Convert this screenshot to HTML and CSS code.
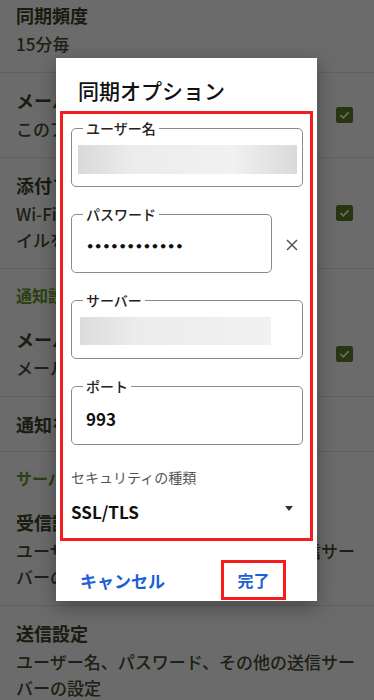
FILE: index.html
```html
<!DOCTYPE html>
<html lang="ja">
<head>
  <meta charset="UTF-8">
  <meta name="viewport" content="width=device-width, initial-scale=1.0">
  <title>同期オプション</title>
  <link rel="stylesheet" href="styles.css">
</head>
<body>
  <div class="settings">
    <div class="pref">
      <div class="pref-text">
        <div class="pref-title">同期頻度</div>
        <div class="pref-summary">15分毎</div>
      </div>
    </div>
    <div class="pref">
      <div class="pref-text">
        <div class="pref-title">メールを同期</div>
        <div class="pref-summary">このアカウントのメールを同期</div>
      </div>
      <svg class="check" viewBox="0 0 17 16"><rect width="17" height="16" rx="2.5"/><path d="M4.5 8.2l2.8 2.6 5.2-5.4"/></svg>
    </div>
    <div class="pref">
      <div class="pref-text">
        <div class="pref-title">添付ファイルをダウンロード</div>
        <div class="pref-summary">Wi-Fi経由で最近のメールの添付ファ<br>イルを自動ダウンロード</div>
      </div>
      <svg class="check" viewBox="0 0 17 16"><rect width="17" height="16" rx="2.5"/><path d="M4.5 8.2l2.8 2.6 5.2-5.4"/></svg>
    </div>
    <div class="pref-category">通知設定</div>
    <div class="pref">
      <div class="pref-text">
        <div class="pref-title">メール通知</div>
        <div class="pref-summary">メール着信時に通知</div>
      </div>
      <svg class="check" viewBox="0 0 17 16"><rect width="17" height="16" rx="2.5"/><path d="M4.5 8.2l2.8 2.6 5.2-5.4"/></svg>
    </div>
    <div class="pref">
      <div class="pref-text">
        <div class="pref-title">通知を管理</div>
      </div>
    </div>
    <div class="pref-category">サーバー設定</div>
    <div class="pref">
      <div class="pref-text">
        <div class="pref-title">受信設定</div>
        <div class="pref-summary">ユーザー名、パスワード、その他の受信サーバーの設定</div>
      </div>
    </div>
    <div class="pref">
      <div class="pref-text">
        <div class="pref-title">送信設定</div>
        <div class="pref-summary">ユーザー名、パスワード、その他の送信サーバーの設定</div>
      </div>
    </div>
  </div>

  <div class="scrim"></div>

  <div class="dialog">
    <h2 class="dialog-title">同期オプション</h2>
    <div class="highlight">
      <div class="field">
        <span class="field-label">ユーザー名</span>
        <div class="masked masked-full"></div>
      </div>
      <div class="field-row">
        <div class="field field-short field-text">
          <span class="field-label">パスワード</span>
          <span class="dots">••••••••••••</span>
        </div>
        <svg class="clear" viewBox="0 0 12 12"><path d="M1 1l10 10M11 1L1 11"/></svg>
      </div>
      <div class="field">
        <span class="field-label">サーバー</span>
        <div class="masked masked-part"></div>
      </div>
      <div class="field field-text">
        <span class="field-label">ポート</span>
        <span class="field-value">993</span>
      </div>
      <div class="select-label">セキュリティの種類</div>
      <div class="select">
        <span>SSL/TLS</span>
        <svg class="caret" viewBox="0 0 8 5"><path d="M0 0h8L4 5z"/></svg>
      </div>
    </div>
    <div class="actions">
      <button class="action">キャンセル</button>
      <button class="action action-done">完了</button>
    </div>
  </div>
</body>
</html>
```

FILE: styles.css
```css
* {
  margin: 0;
  padding: 0;
  box-sizing: border-box;
}

body {
  font-family: 'Noto Sans CJK JP', 'Noto Sans', sans-serif;
  background-color: #fff;
  color: #3e4428;
  width: 374px;
  height: 700px;
  overflow: hidden;
  position: relative;
}

.settings {
  margin-top: -12px;
}

.pref {
  display: flex;
  align-items: center;
  padding: 15px 16px;
  border-bottom: 1px solid #e4e4e4;
}

.pref-text {
  flex: 1;
}

.pref-title {
  font-size: 18px;
  line-height: 24px;
  font-weight: 700;
}

.pref-summary {
  font-size: 17px;
  line-height: 26px;
  margin-top: 4px;
  font-weight: 500;
  color: #464c30;
}

.check {
  width: 17px;
  height: 16px;
  margin-right: 5px;
  flex-shrink: 0;
}

.check rect {
  fill: #5e7e26;
}

.check path {
  fill: none;
  stroke: #fff;
  stroke-width: 1.8;
}

.pref-category {
  font-size: 16px;
  line-height: 20px;
  font-weight: 700;
  color: #679a2a;
  padding: 16px 16px 7px;
}

.scrim {
  position: absolute;
  inset: 0;
  background: rgba(0, 0, 0, 0.58);
}

.dialog {
  position: absolute;
  left: 56px;
  top: 58px;
  width: 261px;
  height: 543px;
  background: #fff;
  padding: 0 4px;
  box-shadow: 0 6px 18px rgba(0, 0, 0, 0.35);
}

.dialog-title {
  font-size: 21px;
  line-height: 28px;
  font-weight: 500;
  color: #111;
  padding: 18px 0 0 18px;
  margin-bottom: 7px;
}

.highlight {
  border: 3px solid #f41c1c;
  padding: 14px 7px 14px 8px;
}

.field {
  position: relative;
  height: 59px;
  border: 1.5px solid #8c8a90;
  border-radius: 5px;
  padding: 16px 5px 11px 6px;
  margin-bottom: 27px;
}

.field-label {
  position: absolute;
  top: -11px;
  left: 11px;
  background: #fff;
  padding: 0 3px;
  font-size: 14px;
  line-height: 20px;
  font-weight: 500;
  color: #222;
}

.masked {
  height: 29px;
  background: linear-gradient(90deg, #d9d9d9, #ececec 25%, #f1f1f1 70%, #dadada);
}

.masked-part {
  margin-left: 2px;
  width: 191px;
  height: 28px;
  background: linear-gradient(90deg, #dcdcdc, #ececec 30%, #f1f1f1);
}

.field-row {
  display: flex;
  align-items: center;
}

.field-row .field {
  flex-shrink: 0;
}

.field-short {
  width: 201px;
}

.field-text {
  display: flex;
  align-items: center;
  padding: 6px 0 0 14px;
}

.dots {
  font-family: 'DejaVu Sans', sans-serif;
  font-size: 13px;
  font-weight: 700;
  letter-spacing: -0.2px;
  color: #111;
}

.field-value {
  font-size: 17px;
  font-weight: 700;
  color: #111;
}

.clear {
  width: 12px;
  height: 12px;
  margin: 0 0 25px 14px;
}

.clear path {
  stroke: #555;
  stroke-width: 1.5;
}

.select-label {
  font-size: 14px;
  line-height: 20px;
  color: #555;
  margin-top: -5px;
}

.select {
  display: flex;
  align-items: center;
  justify-content: space-between;
  margin-top: 13px;
  padding-right: 10px;
  font-size: 17px;
  line-height: 24px;
  font-weight: 700;
  color: #111;
}

.caret {
  width: 8px;
  height: 5px;
  margin-bottom: 7px;
}

.caret path {
  fill: #333;
}

.actions {
  display: flex;
  align-items: center;
  margin-top: 19px;
  padding-left: 20px;
}

.action {
  background: none;
  border: none;
  font-family: 'Noto Sans CJK JP', sans-serif;
  font-size: 17px;
  font-weight: 700;
  color: #1c5fd6;
  height: 40px;
}

.action-done {
  margin-left: 56px;
  width: 65px;
  border: 3px solid #f41c1c;
  font-size: 16px;
}
```
